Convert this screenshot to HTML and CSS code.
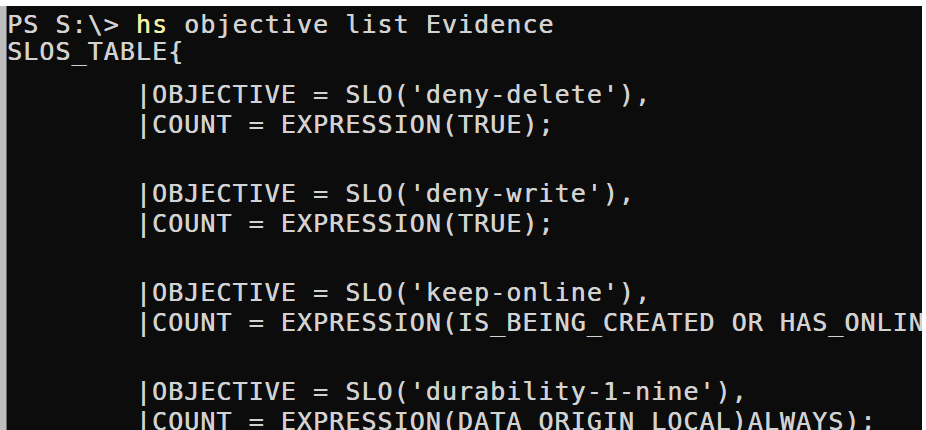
FILE: index.html
```html
<!DOCTYPE html>
<html>
<head>
<meta charset="utf-8">
<link rel="stylesheet" href="styles.css">
</head>
<body>
<div class="screen">
  <div class="edge"></div>
  <div class="terminal">
    <div class="line first">PS S:\&gt; <span class="cmd">hs</span> objective list Evidence</div>
    <div class="line">SLOS_TABLE{</div>
    <div class="group">
      <div class="line">        |OBJECTIVE = SLO('deny-delete'),</div>
      <div class="line">        |COUNT = EXPRESSION(TRUE);</div>
    </div>
    <div class="group">
      <div class="line">        |OBJECTIVE = SLO('deny-write'),</div>
      <div class="line">        |COUNT = EXPRESSION(TRUE);</div>
    </div>
    <div class="group">
      <div class="line">        |OBJECTIVE = SLO('keep-online'),</div>
      <div class="line">        |COUNT = EXPRESSION(IS_BEING_CREATED OR HAS_ONLINE_COPY);</div>
    </div>
    <div class="group">
      <div class="line">        |OBJECTIVE = SLO('durability-1-nine'),</div>
      <div class="line">        |COUNT = EXPRESSION(DATA_ORIGIN_LOCAL)ALWAYS);</div>
    </div>
  </div>
</div>
</body>
</html>
```

FILE: styles.css
```css
html, body {
  margin: 0;
  padding: 0;
  background: #ffffff;
  height: 100%;
}
.screen {
  display: flex;
  height: 430px;
  padding-top: 6px;
  padding-right: 4px;
  box-sizing: border-box;
  overflow: hidden;
}
.edge {
  width: 6px;
  flex: none;
  background: #bebebe;
  border-right: 1px solid #6a6a6a;
}
.terminal {
  flex: 1;
  background: #0c0c0c;
  color: #d2d2d2;
  font-family: "DejaVu Sans Mono", monospace;
  font-size: 25px;
  letter-spacing: 1.05px;
  text-shadow: 0.4px 0 0 #d2d2d2;
  overflow: hidden;
}
.line {
  white-space: pre;
  height: 27px;
  line-height: 27px;
}
.line.first {
  margin-top: 5px;
}
.group .line {
  height: 30px;
  line-height: 30px;
}
.group {
  margin-top: 15px;
}
.group + .group {
  margin-top: 39px;
}
.cmd {
  color: #f9f1a5;
  text-shadow: 0.4px 0 0 #f9f1a5;
}
```
